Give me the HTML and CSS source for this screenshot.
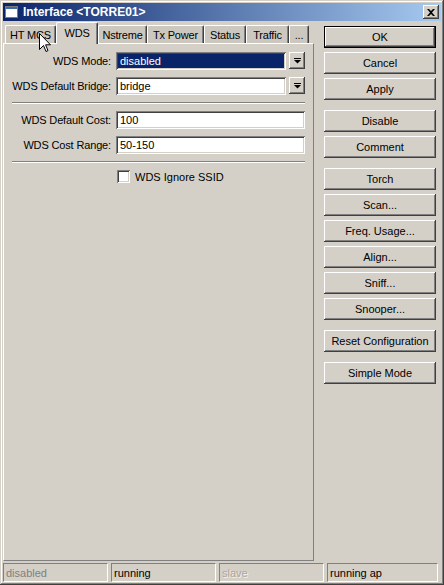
FILE: index.html
```html
<!DOCTYPE html>
<html>
<head>
<meta charset="utf-8">
<link rel="stylesheet" href="styles.css">
</head>
<body>
<div class="window">
  <div class="titlebar">
    <svg class="ticon" width="13" height="12" viewBox="0 0 13 12">
      <rect x="0.5" y="0.5" width="12" height="11" fill="#fff" stroke="#7a7a7a"/>
      <rect x="1" y="1" width="11" height="2" fill="#3a6ea5"/>
    </svg>
    <span class="title">Interface &lt;TORRE01&gt;</span>
    <div class="close">
      <svg width="8" height="7" viewBox="0 0 8 7">
        <path d="M0 0h2l2 2 2-2h2L5 3.5 8 7H6L4 5 2 7H0l3-3.5z" fill="#000"/>
      </svg>
    </div>
  </div>
  <div class="main">
    <div class="left">
      <div class="tabs">
        <div class="tab t-ht">HT MCS</div>
        <div class="tab active t-wds">WDS</div>
        <div class="tab t-ns">Nstreme</div>
        <div class="tab t-tx">Tx Power</div>
        <div class="tab t-st">Status</div>
        <div class="tab t-tr">Traffic</div>
        <div class="tab t-more">...</div>
      </div>
      <div class="panel">
        <div class="row">
          <div class="label">WDS Mode:</div>
          <div class="combo">
            <div class="field sel"><span class="seltext">disabled</span></div>
            <div class="dropbtn"><svg width="7" height="6" viewBox="0 0 7 6"><rect x="0" y="0" width="7" height="1" fill="#000"/><path d="M0 2h7L3.5 5.5z" fill="#000"/></svg></div>
          </div>
        </div>
        <div class="row">
          <div class="label">WDS Default Bridge:</div>
          <div class="combo">
            <div class="field">bridge</div>
            <div class="dropbtn"><svg width="7" height="6" viewBox="0 0 7 6"><rect x="0" y="0" width="7" height="1" fill="#000"/><path d="M0 2h7L3.5 5.5z" fill="#000"/></svg></div>
          </div>
        </div>
        <div class="sep"></div>
        <div class="row">
          <div class="label">WDS Default Cost:</div>
          <div class="field">100</div>
        </div>
        <div class="row">
          <div class="label">WDS Cost Range:</div>
          <div class="field">50-150</div>
        </div>
        <div class="sep"></div>
        <div class="checkrow">
          <div class="checkbox"></div>
          <span class="checklabel">WDS Ignore SSID</span>
        </div>
      </div>
    </div>
    <div class="right">
      <div class="group">
        <div class="btn default">OK</div>
        <div class="btn">Cancel</div>
        <div class="btn">Apply</div>
      </div>
      <div class="group">
        <div class="btn">Disable</div>
        <div class="btn">Comment</div>
      </div>
      <div class="group">
        <div class="btn">Torch</div>
        <div class="btn">Scan...</div>
        <div class="btn">Freq. Usage...</div>
        <div class="btn">Align...</div>
        <div class="btn">Sniff...</div>
        <div class="btn">Snooper...</div>
      </div>
      <div class="group">
        <div class="btn">Reset Configuration</div>
      </div>
      <div class="group">
        <div class="btn">Simple Mode</div>
      </div>
    </div>
  </div>
  <div class="status">
    <div class="cell gray">disabled</div>
    <div class="cell">running</div>
    <div class="cell faint">slave</div>
    <div class="cell last">running ap</div>
  </div>
  <svg class="cursor" width="12" height="20" viewBox="0 0 12 20">
    <path d="M0.5 0.5 L0.5 16.5 L4.5 12.5 L7 18.5 L9 17.6 L6.6 11.8 L11.5 11.8 Z" fill="#fff" stroke="#000" stroke-width="1" stroke-linejoin="miter"/>
  </svg>
</div>
</body>
</html>
```

FILE: styles.css
```css
* { box-sizing: border-box; }
html, body { margin: 0; padding: 0; background: #d4d0c8; }
body {
  font-family: "Liberation Sans", Arial, sans-serif;
  font-size: 11px;
  color: #000;
}
.window {
  position: relative;
  width: 444px;
  height: 585px;
  padding: 3px;
  background: #d4d0c8;
  display: flex;
  flex-direction: column;
  box-shadow: inset -1px -1px #404040, inset 1px 1px #d4d0c8, inset -2px -2px #808080, inset 2px 2px #fff;
  overflow: hidden;
}
.titlebar {
  height: 18px;
  flex: 0 0 18px;
  display: flex;
  align-items: center;
  background: linear-gradient(to right, #0a246a, #a6caf0);
  padding-left: 2px;
}
.ticon { flex: 0 0 auto; margin-right: 5px; }
.title {
  color: #fff;
  font-weight: bold;
  font-size: 12px;
  flex: 1;
  white-space: nowrap;
}
.close {
  width: 16px;
  height: 14px;
  margin-right: 2px;
  background: #d4d0c8;
  display: flex;
  align-items: center;
  justify-content: center;
  box-shadow: inset -1px -1px #404040, inset 1px 1px #fff, inset -2px -2px #808080;
}
.main {
  flex: 1;
  display: flex;
  gap: 10px;
}
.left {
  width: 311px;
  display: flex;
  flex-direction: column;
}
.tabs {
  height: 22px;
  flex: 0 0 22px;
  display: flex;
  align-items: flex-end;
  padding-left: 2px;
}
.tab {
  height: 18px;
  display: flex;
  align-items: center;
  justify-content: center;
  background: #ccc8c0;
  border-top: 1px solid #fff;
  border-left: 1px solid #fff;
  border-right: 1px solid #404040;
  border-radius: 2px 2px 0 0;
  box-shadow: inset -1px 0 #808080;
  white-space: nowrap;
  letter-spacing: -0.2px;
}
.tab.active {
  height: 22px;
  margin-bottom: -1px;
  background: #d4d0c8;
  position: relative;
  z-index: 1;
  padding-bottom: 2px;
}
.t-ht { width: 51px; }
.t-wds { width: 42px; }
.t-ns { width: 49px; }
.t-tx { width: 57px; }
.t-st { width: 42px; }
.t-tr { width: 43px; }
.t-more { width: 20px; }
.panel {
  flex: 1;
  border-top: 1px solid #fff;
  border-left: 1px solid #fff;
  border-right: 1px solid #808080;
  border-bottom: 1px solid #808080;
  padding: 8px 8px 0 8px;
}
.row {
  display: flex;
  align-items: center;
  height: 18px;
  margin-bottom: 7px;
}
.label {
  width: 99px;
  margin-right: 5px;
  display: flex;
  justify-content: flex-end;
  white-space: nowrap;
  letter-spacing: -0.15px;
}
.combo {
  display: flex;
  width: 189px;
  height: 18px;
  gap: 3px;
}
.field {
  width: 189px;
  height: 18px;
  background: #fff;
  box-shadow: inset 1px 1px #808080, inset -1px -1px #fff, inset 2px 2px #404040, inset -2px -2px #d4d0c8;
  padding: 0 3px 0 4px;
  display: flex;
  align-items: center;
  white-space: nowrap;
}
.combo .field { width: 170px; }
.field.sel { padding: 2px; }
.seltext {
  display: flex;
  align-items: center;
  background: #0a246a;
  color: #fff;
  width: 100%;
  height: 100%;
  padding-left: 2px;
}
.dropbtn {
  width: 16px;
  height: 17px;
  background: #d4d0c8;
  display: flex;
  align-items: center;
  justify-content: center;
  box-shadow: inset -1px -1px #404040, inset 1px 1px #fff, inset -2px -2px #808080;
}
.sep {
  height: 2px;
  border-top: 1px solid #808080;
  border-bottom: 1px solid #fff;
  margin: 1px 0 7px 0;
}
.checkrow {
  display: flex;
  align-items: center;
  height: 13px;
  margin-top: 1px;
  padding-left: 105px;
}
.checkbox {
  width: 13px;
  height: 13px;
  background: #fff;
  box-shadow: inset 1px 1px #808080, inset -1px -1px #fff, inset 2px 2px #404040, inset -2px -2px #d4d0c8;
  margin-right: 5px;
}
.right {
  width: 112px;
  padding-top: 5px;
  display: flex;
  flex-direction: column;
  gap: 10px;
}
.group {
  display: flex;
  flex-direction: column;
  gap: 4px;
}
.btn {
  height: 22px;
  display: flex;
  align-items: center;
  justify-content: center;
  background: #d4d0c8;
  box-shadow: inset -1px -1px #404040, inset 1px 1px #fff, inset -2px -2px #808080;
  white-space: nowrap;
}
.btn.default {
  border: 1px solid #000;
}
.status {
  flex: 0 0 19px;
  height: 19px;
  margin-top: 2px;
  margin-right: 3px;
  display: flex;
  gap: 3px;
}
.cell {
  width: 105px;
  height: 19px;
  border-top: 1px solid #808080;
  border-left: 1px solid #808080;
  border-right: 1px solid #fff;
  border-bottom: 1px solid #fff;
  padding-left: 2px;
  display: flex;
  align-items: center;
  white-space: nowrap;
}
.cell.last { flex: 1; width: auto; }
.cell.gray { color: #808080; }
.cell.faint { color: #aaa69e; text-shadow: 1px 1px #f4f2ee; }
.cursor {
  position: absolute;
  left: 39px;
  top: 33px;
  z-index: 5;
}
```
